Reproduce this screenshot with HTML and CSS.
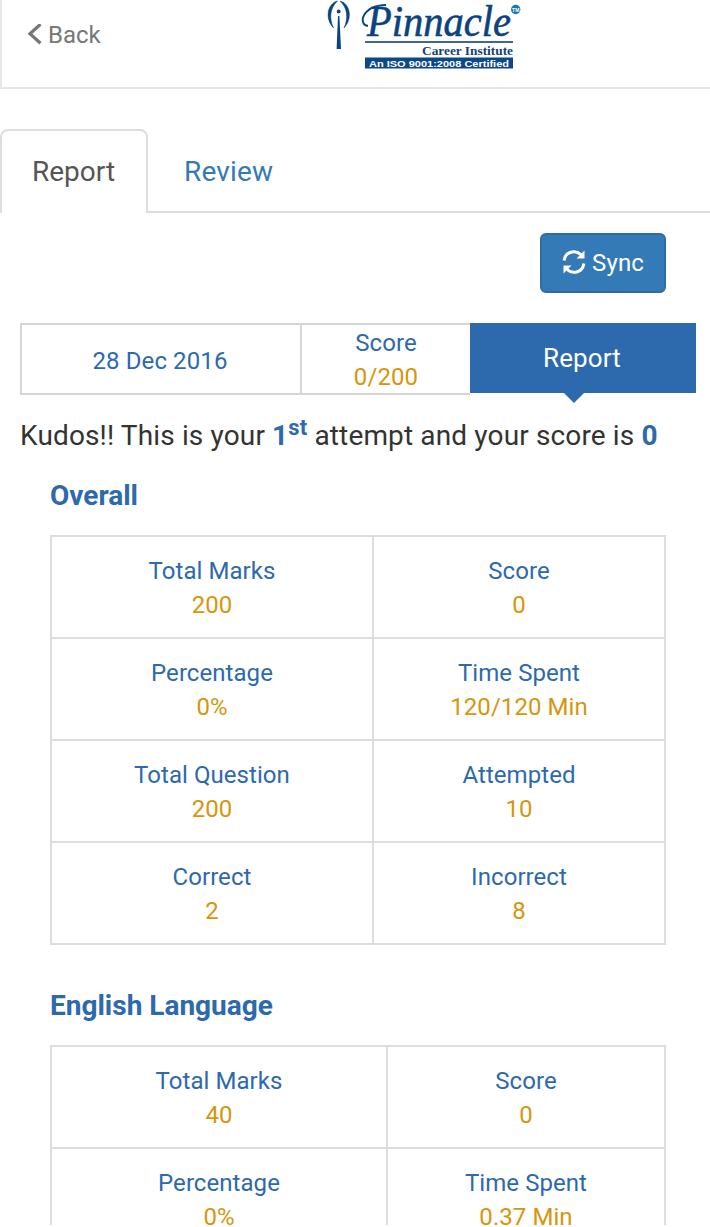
FILE: index.html
```html
<!DOCTYPE html>
<html lang="en">
<head>
    <meta charset="UTF-8">
    <meta name="viewport" content="width=device-width, initial-scale=1.0">
    <title>Report</title>
    <link rel="stylesheet" href="styles.css">
</head>
<body>
<div class="page">

    <header class="header">
        <a class="back">
            <svg width="15" height="22" viewBox="0 0 15 22"><path d="M13.5 0.2L3 9.7L13.5 19.2" fill="none" stroke="#777" stroke-width="3.2"/></svg>
            <span>Back</span>
        </a>
        <svg class="logo" width="200" height="72" viewBox="325 0 200 72">
            <!-- pen nib -->
            <path d="M337.5 1C328 3 324 18 333.5 28C329 18 330 8 337.5 1ZM340 1C349.500 3 353.500 18 344 28C348.500 18 347.500 8 340 1Z" fill="#0b4380" stroke="#0b4380" stroke-width="0.5"/>
            <circle cx="338.7" cy="11.5" r="1.9" fill="#0b4380"/>
            <path d="M338 16H339.4L341 49H336.6Z" fill="#0b4380"/>
            <!-- name -->
            <text class="logo-name" x="367" y="36" textLength="144" lengthAdjust="spacingAndGlyphs">Pinnacle</text>
            <path d="M368 26C358 25 361 6 386 5" fill="none" stroke="#0b4380" stroke-width="1.8"/>
            <circle cx="515.7" cy="9.5" r="4.7" fill="#1679b0"/>
            <text class="logo-tm" x="512.1" y="11.5" textLength="7.2" lengthAdjust="spacingAndGlyphs">TM</text>
            <rect x="365" y="41" width="148" height="2" fill="#3f659b"/>
            <text class="logo-sub" x="422" y="55" textLength="91" lengthAdjust="spacingAndGlyphs">Career Institute</text>
            <rect x="365" y="57.5" width="148" height="11" fill="#0b4789"/>
            <text class="logo-iso" x="369" y="66.7" textLength="140" lengthAdjust="spacingAndGlyphs">An ISO 9001:2008 Certified</text>
        </svg>
    </header>

    <nav class="tabs">
        <a class="tab active">Report</a>
        <a class="tab">Review</a>
    </nav>

    <div class="toolbar">
        <button class="sync-btn">
            <svg width="24" height="26" viewBox="0 0 24 26">
                <g fill="none" stroke="#fff" stroke-width="3">
                    <path d="M2.200 11.500C3 3 13 0 19 5.600"/>
                    <path d="M21.800 14.500C21 23 11 26 5 20.400"/>
                </g>
                <path d="M22.500 1.500V9.500H14.500ZM1.500 24.500V16.500H9.500Z" fill="#fff"/>
            </svg>
            <span>Sync</span>
        </button>
    </div>

    <div class="attempt">
        <div class="attempt-date">28 Dec 2016</div>
        <div class="attempt-score">Score<br><span class="value">0/200</span></div>
        <div class="attempt-report">Report</div>
    </div>

    <p class="message">Kudos!! This is your <b>1<sup>st</sup></b> attempt and your score is <b>0</b></p>

    <section class="section">
        <h2>Overall</h2>
        <table>
            <colgroup><col class="overall-left"><col></colgroup>
            <tr>
                <td>Total Marks<br><span class="value">200</span></td>
                <td>Score<br><span class="value">0</span></td>
            </tr>
            <tr>
                <td>Percentage<br><span class="value">0%</span></td>
                <td>Time Spent<br><span class="value">120/120 Min</span></td>
            </tr>
            <tr>
                <td>Total Question<br><span class="value">200</span></td>
                <td>Attempted<br><span class="value">10</span></td>
            </tr>
            <tr>
                <td>Correct<br><span class="value">2</span></td>
                <td>Incorrect<br><span class="value">8</span></td>
            </tr>
        </table>
    </section>

    <section class="section">
        <h2>English Language</h2>
        <table>
            <colgroup><col class="english-left"><col></colgroup>
            <tr>
                <td>Total Marks<br><span class="value">40</span></td>
                <td>Score<br><span class="value">0</span></td>
            </tr>
            <tr>
                <td>Percentage<br><span class="value">0%</span></td>
                <td>Time Spent<br><span class="value">0.37 Min</span></td>
            </tr>
        </table>
    </section>

</div>
</body>
</html>
```
FILE: styles.css
```css
* {
    box-sizing: border-box;
}

body {
    margin: 0;
    font-family: Roboto, sans-serif;
    font-size: 24px;
    line-height: 34px;
    color: #333;
    background-color: #fff;
}

.page {
    height: 1225px;
    overflow: hidden;
}

.header {
    display: flex;
    align-items: flex-start;
    height: 89px;
    border-left: 2px solid #e7e7e7;
    border-bottom: 2px solid #e7e7e7;
}

.back {
    display: flex;
    align-items: center;
    width: 323px;
    padding: 18px 0 0 25px;
    color: #777;
}

.back span {
    margin-left: 6px;
}

.logo {
    overflow: visible;
}

.logo-name {
    font: italic 45px "Liberation Serif", serif;
    fill: #0b4380;
    stroke: #0b4380;
    stroke-width: 0.6;
}

.logo-tm {
    font: bold 5px "Liberation Sans", sans-serif;
    fill: #fff;
}

.logo-sub {
    font: bold 13px "Liberation Serif", serif;
    fill: #173f78;
}

.logo-iso {
    font: bold 9.5px "Liberation Sans", sans-serif;
    fill: #fff;
}

.tabs {
    display: flex;
    height: 84px;
    margin-top: 40px;
    border-bottom: 2px solid #ddd;
    font-size: 28px;
    line-height: 40px;
}

.tab {
    height: 84px;
    padding: 21px 34px 19px;
    border: 2px solid transparent;
    border-bottom: none;
    letter-spacing: 0.15px;
    color: #337ab7;
}

.tab.active {
    width: 148px;
    padding: 21px 30px 19px;
    border-color: #ddd;
    border-radius: 8px 8px 0 0;
    letter-spacing: 0;
    color: #555;
    background-color: #fff;
}

.toolbar {
    display: flex;
    justify-content: flex-end;
    padding: 20px 44px 30px 0;
}

.sync-btn {
    display: flex;
    align-items: center;
    justify-content: center;
    gap: 6px;
    width: 126px;
    height: 60px;
    padding: 0;
    border: 2px solid #2e6da4;
    border-radius: 6px;
    font: 24px Roboto, sans-serif;
    letter-spacing: 0.15px;
    color: #fff;
    background-color: #337ab7;
}

.sync-btn svg {
    margin-bottom: 3px;
}

.attempt {
    display: flex;
    width: 676px;
    height: 72px;
    margin-left: 20px;
    text-align: center;
    letter-spacing: 0.1px;
    color: #2d69ad;
}

.attempt-date {
    width: 282px;
    padding-right: 2px;
    border: 2px solid #d5d5d5;
    line-height: 72px;
}

.attempt-score {
    width: 168px;
    padding-top: 1px;
    border-top: 2px solid #d5d5d5;
    border-bottom: 2px solid #d5d5d5;
}

.attempt-report {
    position: relative;
    width: 226px;
    height: 70px;
    padding-right: 2px;
    font-size: 26px;
    line-height: 70px;
    color: #fff;
    background-color: #2d69ad;
}

/* pointer under the report cell */
.attempt-report::after {
    content: "";
    position: absolute;
    top: 70px;
    left: 94px;
    border: 10px solid transparent;
    border-top-color: #2d69ad;
    border-bottom: none;
}

.value {
    color: #d6960c;
}

.message {
    margin: 21px 0 0 20px;
    font-size: 28px;
    line-height: 40px;
    letter-spacing: 0.14px;
    white-space: nowrap;
}

.message b {
    color: #2d69ad;
}

.message sup {
    position: relative;
    top: -10px;
    font-size: 22px;
    line-height: 0;
    vertical-align: baseline;
}

.section {
    width: 616px;
    margin: 20px 0 41px 50px;
}

h2 {
    margin: 0 0 19px;
    font-size: 28px;
    line-height: 40px;
    color: #2d69ad;
}

table {
    width: 616px;
    border-collapse: collapse;
    table-layout: fixed;
}

td {
    height: 102px;
    padding: 17px 16px 15px;
    border: 2px solid #ddd;
    text-align: center;
    letter-spacing: 0.06px;
    color: #2d69ad;
}

.overall-left {
    width: 322px;
}

.english-left {
    width: 336px;
}
```
